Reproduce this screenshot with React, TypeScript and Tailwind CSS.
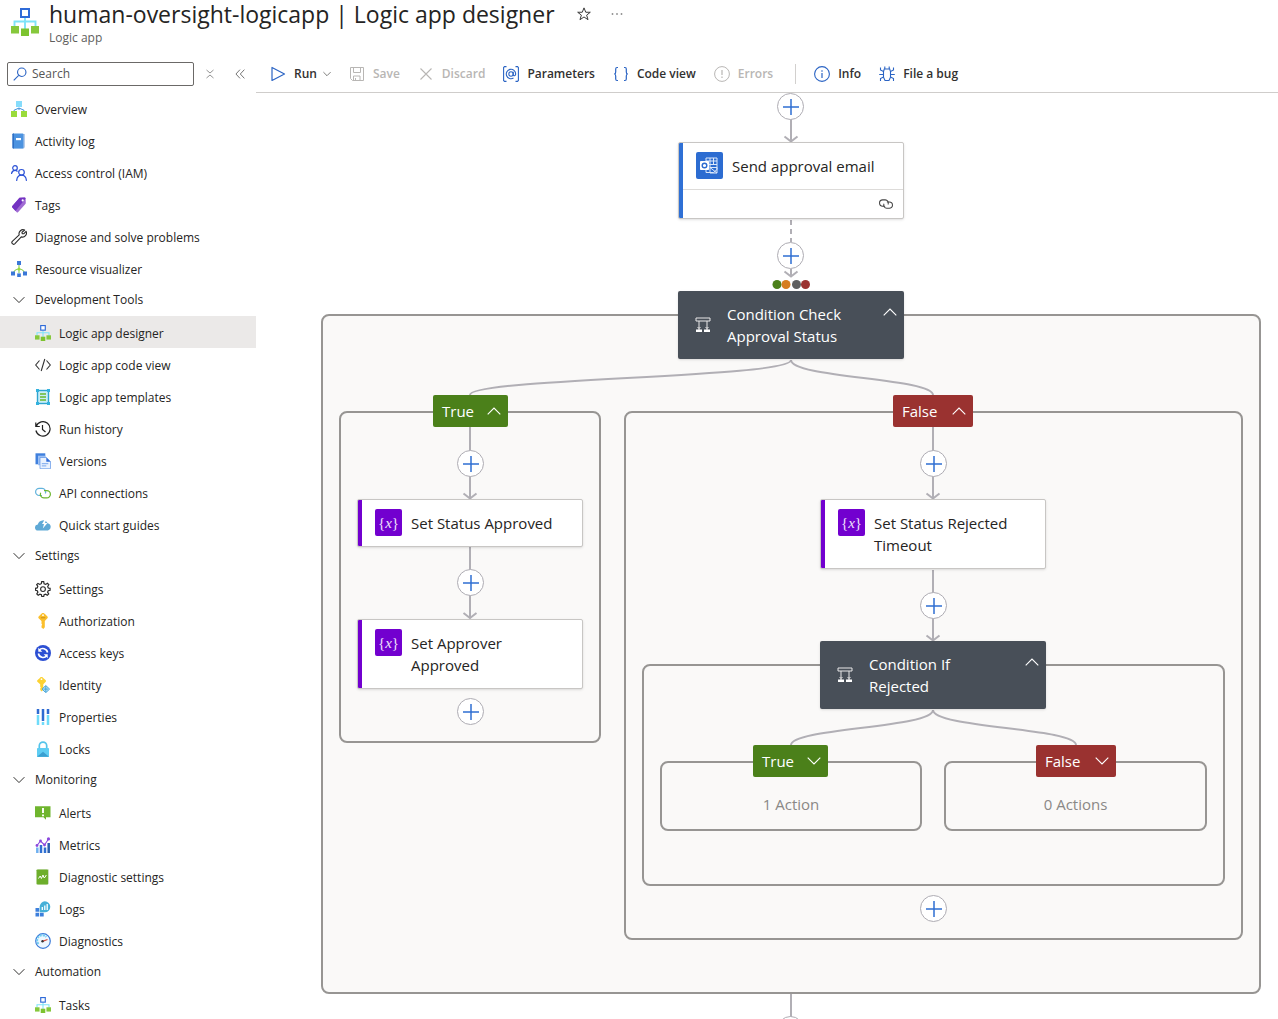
import type { ReactNode } from "react";

/* ---------- shared drawing helpers ---------- */

function Svg({ children, size = "h-4 w-4", box = "0 0 16 16" }: { children: ReactNode; size?: string; box?: string }) {
  return (
    <svg className={`${size} shrink-0`} viewBox={box} fill="none" aria-hidden="true">
      {children}
    </svg>
  );
}

function Chevron({ up = false, size = "h-2 w-3.5" }: { up?: boolean; size?: string }) {
  return (
    <Svg size={size} box="0 0 14 8">
      <path d={up ? "M.7 7.3 7 1l6.3 6.3" : "M.7.7 7 7 13.3.7"} stroke="currentColor" strokeWidth="1.1" />
    </Svg>
  );
}

function LogicAppMark({ size }: { size?: string }) {
  return (
    <Svg size={size} box="0 0 28 28">
      <path d="M14 9v12M3.500 19v-5.500h21V19" stroke="#7fe3f8" strokeWidth="1.900" />
      <rect x="10" y="1" width="8" height="8" fill="#fff" stroke="#2f6bd8" strokeWidth="2" />
      <rect x="0" y="18" width="8" height="7.500" fill="#86c83c" />
      <rect x="10" y="20.500" width="8" height="7.500" fill="#7dc32f" />
      <rect x="20" y="18" width="8" height="7.500" fill="#86c83c" />
    </Svg>
  );
}

const icons: Record<string, ReactNode> = {
  overview: (
    <Svg>
      <path d="M8 7v2M3 10.500V9.300L8 7l5 2.300v1.200" stroke="#3f8fd8" strokeWidth="1" />
      <rect x="5" y="0" width="6" height="6" fill="#86dcfb" />
      <rect x="0" y="10" width="6" height="6" fill="#9adb3b" />
      <rect x="10" y="10" width="6" height="6" fill="#9adb3b" />
    </Svg>
  ),
  activity: (
    <Svg>
      <path d="M3 1h11v13l-1 1.500H3z" fill="#b8cdea" />
      <rect x="1.500" y=".5" width="11" height="15" rx=".8" fill="#4c93e0" />
      <path d="M1.500 1.300c0-.5.3-.8.8-.8H3v15h-.7c-.5 0-.8-.3-.8-.8z" fill="#2f6fc4" />
      <rect x="5" y="5" width="5" height="2.200" fill="#fff" />
    </Svg>
  ),
  access: (
    <Svg>
      <g stroke="#2c52d6" strokeWidth="1.200" strokeLinecap="round">
        <circle cx="4" cy="3" r="2.300" />
        <circle cx="10.500" cy="7.300" r="2.800" />
        <path d="M.5 8.500C1 6.500 2.300 5.400 4 5.400c.9 0 1.600.3 2.200.8M5.700 15.400c.3-3 2.200-5.200 4.800-5.200s4.600 2.200 4.900 5.200" />
      </g>
    </Svg>
  ),
  tags: (
    <Svg>
      <path d="M8.500.8 13.600.5c.5 0 .9.400 1 .9l.2 4.600c0 .4-.1.700-.4 1L7 15.200c-.4.400-.9.400-1.300 0L1.300 10.500c-.4-.4-.4-1 0-1.400z" fill="#a06bd3" />
      <path d="M8.500.8 13.600.5c.5 0 .9.400 1 .9L4.500 13.900 1.300 10.500c-.4-.4-.4-1 0-1.400z" fill="#7433c2" />
      <circle cx="11.700" cy="3.400" r="1.100" fill="#fff" />
    </Svg>
  ),
  wrench: (
    <Svg>
      <path
        d="M13.700 1.100a4 4 0 0 0-5.500 4.800L1.300 12.400a1.700 1.700 0 0 0 2.400 2.400l6.600-6.900a4 4 0 0 0 4.800-5.500L12.700 4.800l-1.500-.2-.2-1.300z"
        stroke="#2b2b2b"
        strokeWidth="1.100"
        strokeLinejoin="round"
      />
    </Svg>
  ),
  visualizer: (
    <Svg>
      <path d="M8 4v8M2.500 11.500C4 8.500 6 8 8 8s4 .5 5.500 3.500" stroke="#8fd05a" strokeWidth="1.200" />
      <circle cx="8" cy="8" r="1.500" fill="#9adb3b" />
      <rect x="6" y="0" width="4" height="4" fill="#3b78d8" />
      <rect x="0" y="10.500" width="4" height="4" fill="#3b78d8" />
      <rect x="6.200" y="12.400" width="3.600" height="3.600" fill="#3b78d8" />
      <rect x="12" y="10.500" width="4" height="4" fill="#3b78d8" />
    </Svg>
  ),
  designer: <LogicAppMark size="h-4 w-4" />,
  code: (
    <Svg>
      <path d="M4.500 3.500.7 8l3.800 4.500M11.500 3.500 15.300 8l-3.800 4.500M9.800 2 6.200 14" stroke="#333" strokeWidth="1.100" />
    </Svg>
  ),
  templates: (
    <Svg>
      <rect x="2.500" y="1.500" width="11" height="13" fill="#c8eef8" stroke="#2fa4cf" strokeWidth="1.400" />
      <path d="M1 0h3v3H1zM12 0h3v3h-3zM1 13h3v3H1zM12 13h3v3h-3z" fill="#32b2de" />
      <path d="M5 5h6M5 8h6M5 11h6" stroke="#69b82d" strokeWidth="1.600" />
    </Svg>
  ),
  history: (
    <Svg>
      <path d="M1.200 5.200A7.200 7.200 0 1 1 .9 9.500M.8 1.500v4h4M7.500 4v4.500l3 2.500" stroke="#222" strokeWidth="1.200" />
    </Svg>
  ),
  versions: (
    <Svg>
      <path d="M.5.3h9.800v11H.5z" fill="#4080dd" />
      <path d="M3 2.700h7.500v9.500H3z" fill="#9cc0f4" />
      <path d="M5 4.500h6.500l4 4v7.200H5z" fill="#eaf2fe" stroke="#5d93e6" strokeWidth=".7" />
      <path d="m11.300 4.500 4.200 4.200h-4.200z" fill="#2f6bd8" />
      <path d="M6.800 10.700h6.500M6.800 12.900h4.500" stroke="#79a7ec" />
    </Svg>
  ),
  api: (
    <Svg>
      <path d="M7 10.500H4.200A3.600 3.600 0 0 1 4.200 3.300H7a3.600 3.600 0 0 1 3.300 5.200" stroke="#62b3dc" strokeWidth="1.200" />
      <path d="M9 5.700h2.800a3.600 3.600 0 0 1 0 7.200H9A3.600 3.600 0 0 1 5.700 7.700" stroke="#6cb52e" strokeWidth="1.200" />
    </Svg>
  ),
  quick: (
    <Svg>
      <path d="M3.200 13.500a3 3 0 0 1-.4-6 5.300 5.300 0 0 1 9.900-1.200 3.700 3.700 0 0 1 .3 7.200z" fill="#5fa9d6" />
      <path d="m10 2-3 5h2l-1.200 4.500L12.500 6H10l1.500-4z" fill="#fff" />
    </Svg>
  ),
  gear: (
    <Svg>
      <path
        d="m6.700.7-.4 2-1.500.7-1.800-1L1.700 3.700l1.100 1.700-.6 1.500-1.700.4v2l1.800.4.6 1.500-1.100 1.700L3.200 14.300l1.700-1.100 1.500.6.400 1.700h1.900l.4-1.700 1.500-.6 1.700 1.100 1.400-1.400-1.100-1.700.6-1.500 1.900-.4v-2L13.300 7l-.6-1.500 1.100-1.800-1.400-1.400-1.700 1.100-1.600-.6-.4-2.100z"
        stroke="#2b2b2b"
        strokeWidth="1.200"
      />
      <circle cx="8" cy="8.100" r="2.400" stroke="#2b2b2b" strokeWidth="1.100" />
    </Svg>
  ),
  key: (
    <Svg>
      <path d="M8 0c1 0 1.500.6 2.200 1.300l2 2c.8.700.8 1.500 0 2.200L9.800 8v6.300L8.300 16 6.500 14.500v-1.800l.7-.9-.7-1V8L3.900 5.500c-.8-.7-.8-1.500 0-2.200l2-2C6.500.6 7 0 8 0z" fill="#fbbf2c" />
      <path d="M5.800 4.800h4.500" stroke="#c98d15" />
      <circle cx="8" cy="2.200" r=".9" fill="#fff" />
    </Svg>
  ),
  refresh: (
    <Svg>
      <circle cx="8" cy="8" r="8" fill="#2c4fd3" />
      <path d="M12.600 7.500A4.800 4.800 0 0 0 4.200 5.200M3.400 8.500a4.800 4.800 0 0 0 8.400 2.300" stroke="#fff" strokeWidth="1.600" />
      <path d="M3.300 2.800v4h4zM12.700 13.200v-4h-4z" fill="#fff" />
    </Svg>
  ),
  identity: (
    <Svg>
      <path d="M6.500 0c.9 0 1.300.5 2 1.200l2 1.900c.7.600.7 1.300 0 1.900L8.300 7.300v5.400L6.600 14.400 5.200 13v-1.600l.6-.8-.6-.9V7.300L2.600 5c-.7-.6-.7-1.300 0-1.900l2-1.900C5.200.5 5.600 0 6.500 0z" fill="#fcd232" />
      <circle cx="6.500" cy="2.200" r=".9" fill="#fff" />
      <path d="m10.800 8.500 3.800 3.600-3.800 3.600L7 12.100z" fill="#b5e1f8" stroke="#3e9fd2" strokeWidth=".9" />
      <path d="M10.800 9v6M8.500 12.100h4.600" stroke="#3e9fd2" strokeWidth=".9" />
    </Svg>
  ),
  properties: (
    <Svg>
      <path d="M3 0v5M8 0v12M13 0v5" stroke="#2f6bd2" strokeWidth="2.500" />
      <path d="M3 6v10M8 13v3M13 6v10" stroke="#6fdcfa" strokeWidth="2.500" />
    </Svg>
  ),
  lock: (
    <Svg>
      <path d="M4.300 8V4.800a3.700 3.700 0 0 1 7.400 0V8" stroke="#55c4ea" strokeWidth="1.700" />
      <rect x="2" y="7" width="12" height="9" rx=".7" fill="#5ecdf3" />
      <path d="m2 15.700 6-5 6 5z" fill="#3a9fd0" />
    </Svg>
  ),
  alerts: (
    <Svg>
      <path d="M0 1.200h15.500v11H11v2.500l-2.500-2.500H0z" fill="#6fb52e" />
      <path d="M8 3v5M8 9.500v1.800" stroke="#fff" strokeWidth="1.900" />
    </Svg>
  ),
  metrics: (
    <Svg>
      <path d="M2.300 10.500V16" stroke="#6fb0f0" strokeWidth="2.500" />
      <path d="M13.700 6v10" stroke="#2a5fae" strokeWidth="2.500" />
      <path d="M6 8V16M10 10.500V16" stroke="#2f6fd2" strokeWidth="2.500" />
      <path d="M2 8.500 5.500 4l4 4 4-6" stroke="#8b48dd" strokeWidth="1.100" />
      <g fill="#8b48dd">
        <circle cx="2" cy="8.500" r="1.400" />
        <circle cx="5.500" cy="4" r="1.400" />
        <circle cx="9.500" cy="8" r="1.400" />
        <circle cx="13.500" cy="1.900" r="1.600" />
      </g>
    </Svg>
  ),
  diagsettings: (
    <Svg>
      <path d="M3 .5h11v14l-1 1H3z" fill="#cfdcc2" />
      <rect x="1.500" y=".5" width="11.500" height="15" rx=".7" fill="#6dae2b" />
      <path d="m3.500 9.500 1.700-2.500 1.200 2.500 1.600-3.500.8 2.500h1l1.500-2.500" stroke="#fff" strokeWidth="1" />
    </Svg>
  ),
  logs: (
    <Svg>
      <path d="M.5 7h3.700v3.700H.5zM.5 11.700h3.700v3.800H.5zM5 11.700h3.700v3.800H5z" fill="#3d7fdc" />
      <path d="M9.800.3a5.500 5.500 0 1 1 0 11H4.700V5.500A5.400 5.400 0 0 1 9.800.3z" fill="#45b0d8" />
      <path d="M7.300 6v3M9.800 4.500V9M12.200 3v6" stroke="#fff" strokeWidth="1.300" />
    </Svg>
  ),
  diagnostics: (
    <Svg>
      <circle cx="8" cy="8" r="7.300" fill="#eef8ff" stroke="#3c7bd9" strokeWidth="1.200" />
      <path d="M3.500 11a5.200 5.200 0 0 1 7.800-7" stroke="#73cdf2" strokeWidth="1.900" strokeDasharray="2.200 .8" />
      <path d="m7.500 8.400 5-1.900" stroke="#d84b3c" strokeWidth="1.200" />
      <circle cx="7.500" cy="8.300" r="1.200" fill="#333" />
    </Svg>
  ),
};

/* ---------- sidebar ---------- */

type Item = { icon: string; label: string; active?: boolean };

const topItems: Item[] = [
  { icon: "overview", label: "Overview" },
  { icon: "activity", label: "Activity log" },
  { icon: "access", label: "Access control (IAM)" },
  { icon: "tags", label: "Tags" },
  { icon: "wrench", label: "Diagnose and solve problems" },
  { icon: "visualizer", label: "Resource visualizer" },
];

const groups: { title: string; items: Item[] }[] = [
  {
    title: "Development Tools",
    items: [
      { icon: "designer", label: "Logic app designer", active: true },
      { icon: "code", label: "Logic app code view" },
      { icon: "templates", label: "Logic app templates" },
      { icon: "history", label: "Run history" },
      { icon: "versions", label: "Versions" },
      { icon: "api", label: "API connections" },
      { icon: "quick", label: "Quick start guides" },
    ],
  },
  {
    title: "Settings",
    items: [
      { icon: "gear", label: "Settings" },
      { icon: "key", label: "Authorization" },
      { icon: "refresh", label: "Access keys" },
      { icon: "identity", label: "Identity" },
      { icon: "properties", label: "Properties" },
      { icon: "lock", label: "Locks" },
    ],
  },
  {
    title: "Monitoring",
    items: [
      { icon: "alerts", label: "Alerts" },
      { icon: "metrics", label: "Metrics" },
      { icon: "diagsettings", label: "Diagnostic settings" },
      { icon: "logs", label: "Logs" },
      { icon: "diagnostics", label: "Diagnostics" },
    ],
  },
  { title: "Automation", items: [{ icon: "designer", label: "Tasks" }] },
];

function NavLink({ item, nested = false }: { item: Item; nested?: boolean }) {
  return (
    <li>
      <a
        href="#"
        aria-current={item.active ? "page" : undefined}
        className={`flex h-8 items-center gap-2 pt-0.5 ${nested ? "pl-[35px]" : "pl-[11px]"} ${item.active ? "bg-[#ebe9e8]" : ""}`}
      >
        {icons[item.icon]}
        <span className="pt-0.5">{item.label}</span>
      </a>
    </li>
  );
}

function Sidebar() {
  return (
    <aside className="flex w-64 shrink-0 flex-col overflow-hidden">
      <div className="flex h-[37px] shrink-0 items-center pl-[7px]">
        <label className="flex h-6 w-[187px] items-center gap-[5px] rounded-xs border border-[#6b6967] pl-[5px]">
          <Svg size="h-3.5 w-3.5">
            <circle cx="10" cy="6" r="4.800" stroke="#2b64c4" strokeWidth="1.300" />
            <path d="M6.500 9.500.8 15.200" stroke="#2b64c4" strokeWidth="1.300" />
          </Svg>
          <input type="search" aria-label="Search" placeholder="Search" className="w-full min-w-0 bg-transparent outline-none placeholder:text-[#555]" />
        </label>
        <button aria-label="Expand all" className="ml-3 text-[#777]">
          <Svg size="h-2.5 w-2">
            <path d="m1 0 7 6 7-6M1 16l7-6 7 6" stroke="currentColor" strokeWidth="1.600" />
          </Svg>
        </button>
        <button aria-label="Collapse menu" className="ml-[21px] text-[#555]">
          <Svg size="h-2.5 w-2.5">
            <path d="M8 1 1.500 8 8 15M15 1 8.500 8l6.500 7" stroke="currentColor" strokeWidth="1.300" />
          </Svg>
        </button>
      </div>
      <nav>
        <ul>
          {topItems.map((item) => (
            <NavLink key={item.label} item={item} />
          ))}
        </ul>
        {groups.map((group) => (
          <section key={group.title}>
            <button className="flex h-8 w-full items-center gap-2.5 pl-[13px]">
              <Chevron size="h-2 w-3" />
              <span>{group.title}</span>
            </button>
            <ul>
              {group.items.map((item) => (
                <NavLink key={item.label} item={item} nested />
              ))}
            </ul>
          </section>
        ))}
      </nav>
    </aside>
  );
}

/* ---------- toolbar ---------- */

function Tool({ label, icon, disabled = false, menu = false }: { label: string; icon: ReactNode; disabled?: boolean; menu?: boolean }) {
  return (
    <button disabled={disabled} className={`flex items-center gap-2 ${disabled ? "text-[#b8b6b4]" : "text-[#323130]"}`}>
      {icon}
      <span className="font-semibold">{label}</span>
      {menu && <Chevron size="-ml-0.5 h-2 w-2" />}
    </button>
  );
}

function Toolbar() {
  return (
    <div className="flex h-[38px] shrink-0 items-center gap-[18px] overflow-hidden border-b border-[#cfcdcb] pl-[14px] whitespace-nowrap" role="toolbar">
      <Tool label="Run" menu icon={<Svg><path d="M2 1.500v13L14.500 8z" stroke="#2b64c4" strokeWidth="1.200" strokeLinejoin="round" /></Svg>} />
      <Tool
        label="Save"
        disabled
        icon={
          <Svg>
            <path d="M1.500 1.500h13v13h-11l-2-2zM4.500 1.500v5h7v-5M4.500 14.500v-4.500h6.500v4.500M6.500 12v2.500" stroke="currentColor" />
          </Svg>
        }
      />
      <Tool label="Discard" disabled icon={<Svg><path d="m2.500 2.500 11 11M13.500 2.500l-11 11" stroke="currentColor" strokeWidth="1.100" /></Svg>} />
      <Tool
        label="Parameters"
        icon={
          <Svg>
            <g stroke="#2b64c4" strokeWidth="1.100">
              <path d="M3.500.6h-2l-.9.900v13l.9.900h2M12.500.6h2l.9.900v13l-.9.900h-2" />
              <circle cx="8" cy="8" r="2.200" />
              <path d="M10.200 5.800v3c0 1.600 2.500 1.300 2.500-.8A4.700 4.700 0 1 0 10.500 12" />
            </g>
          </Svg>
        }
      />
      <Tool
        label="Code view"
        icon={
          <Svg>
            <path d="M5 1.500H4c-1 0-1.300.6-1.300 1.500v3c0 1.200-.5 2-1.500 2 1 0 1.500.8 1.500 2v3c0 .9.300 1.500 1.300 1.500h1M11 1.500h1c1 0 1.300.6 1.300 1.500v3c0 1.200.5 2 1.500 2-1 0-1.500.8-1.500 2v3c0 .9-.3 1.500-1.300 1.500h-1" stroke="#2b64c4" strokeWidth="1.200" />
          </Svg>
        }
      />
      <Tool
        label="Errors"
        disabled
        icon={
          <Svg>
            <circle cx="8" cy="8" r="7.400" stroke="currentColor" />
            <path d="M8 4v5M8 10.500v1.500" stroke="currentColor" strokeWidth="1.200" />
          </Svg>
        }
      />
      <span className="ml-1 h-5 w-px bg-[#d2d0ce]" />
      <Tool
        label="Info"
        icon={
          <Svg>
            <circle cx="8" cy="8" r="7.400" stroke="#2b64c4" strokeWidth="1.100" />
            <path d="M8 7v5M8 4.300v1.400" stroke="#2b64c4" strokeWidth="1.200" />
          </Svg>
        }
      />
      <Tool
        label="File a bug"
        icon={
          <Svg>
            <g stroke="#2b64c4" strokeWidth="1.100">
              <path d="M4.500 5.500 5.300 3h5.400l.8 2.500v5.700L10 14.500H6l-1.500-3.300zM5.800 3V.5M10.200 3V.5" />
              <path d="M4.500 5.500 1.500 4V1.500M4.500 8.500H.2M4.500 11 1.500 12.500V15M11.500 5.500l3-1.500V1.500M11.500 8.500h4.300M11.500 11l3 1.500V15" />
            </g>
          </Svg>
        }
      />
    </div>
  );
}

/* ---------- designer canvas ---------- */

function Frame({ at, children }: { at: string; children?: ReactNode }) {
  return <div className={`absolute rounded-lg border-2 border-[#979593] ${at}`}>{children}</div>;
}

function AddStep({ at }: { at: string }) {
  return (
    <button aria-label="Add a step" className={`absolute flex h-[27px] w-[27px] items-center justify-center rounded-full border border-[#aeacb3] bg-white ${at}`}>
      <Svg>
        <path d="M8 0v16M0 8h16" stroke="#2f6fd2" strokeWidth="1.500" />
      </Svg>
    </button>
  );
}

function VariableIcon() {
  return (
    <span className="flex h-[27px] w-[27px] shrink-0 items-center justify-center rounded-xs bg-[#7200cf] font-['Liberation_Serif',serif] text-[15px] leading-5 text-[#f0e2fb]">
      {"{"}
      <i>x</i>
      {"}"}
    </span>
  );
}

function OutlookIcon() {
  return (
    <span className="flex h-[27px] w-[27px] shrink-0 items-center justify-center rounded-xs bg-[#2c6cd1]">
      <Svg size="h-[17px] w-[19px]" box="0 0 19 17">
        <path d="M6 1h11v11.500l-3.500 3H6zM6 4h11M6 7.500h11M10 1v10M13.500 1v7" stroke="#dce8fa" />
        <path d="M10 10.500h7v5.500h-7zM10 10.500l7 5.500" stroke="#dce8fa" />
        <rect x="0" y="4" width="9" height="9" rx=".8" fill="#fff" />
        <circle cx="4.500" cy="8.500" r="2.300" stroke="#2c6cd1" strokeWidth="1.400" />
      </Svg>
    </span>
  );
}

function ActionCard({ at, accent, icon, label, footer }: { at: string; accent: string; icon: ReactNode; label: string; footer?: ReactNode }) {
  return (
    <div className={`absolute flex w-[226px] overflow-hidden rounded-xs border border-[#c8c6c4] bg-white shadow ${at}`}>
      <span className={`-my-px -ml-px w-[5px] shrink-0 ${accent}`} />
      <div className="flex-1">
        <div className="flex gap-[9px] pt-[9px] pr-4 pb-2.5 pl-[13px]">
          {icon}
          <span className="pt-[3px] pb-0.5 leading-[22px]">{label}</span>
        </div>
        {footer}
      </div>
    </div>
  );
}

function ConditionCard({ at, label }: { at: string; label: string }) {
  return (
    <div className={`absolute flex h-[68px] w-[226px] items-center rounded-xs bg-[#484f58] pl-[17px] text-white shadow ${at}`}>
      <Svg>
        <path d="M1 1h14v3H1zM4 4v9M12 4v9M2.500 10 4 11.500 5.500 10M10.500 10l1.500 1.500 1.500-1.500" stroke="#e8e8e8" />
        <path d="M1 12.500h6V15H1zM9 12.500h6V15H9z" fill="#fff" />
      </Svg>
      <span className="ml-4 w-[140px] leading-[22px]">{label}</span>
      <button aria-label={`Collapse ${label}`} className="-mt-[26px] mr-[7px] ml-auto">
        <Chevron up />
      </button>
    </div>
  );
}

function Branch({ at, kind, open = false }: { at: string; kind: "True" | "False"; open?: boolean }) {
  return (
    <button
      aria-expanded={open}
      className={`absolute flex h-8 items-center justify-between rounded-xs pr-[7px] pl-[9px] text-white ${kind === "True" ? "w-[75px] bg-[#4b801a]" : "w-20 bg-[#9a3230]"} ${at}`}
    >
      <span>{kind}</span>
      <Chevron up={open} />
    </button>
  );
}

function Edges() {
  return (
    <svg className="absolute top-0 left-0 h-[927px] w-[1022px]" viewBox="0 0 1022 927" fill="none" stroke="#b1afb5" strokeWidth="2" aria-hidden="true">
      <path d="M535 26v21M528.500 43.500 535 48.500 541.500 43.500" />
      <path d="M535 127v22" strokeDasharray="5 4" />
      <path d="M535 176v6M528.500 178.500 535 183.500 541.500 178.500" />
      <path d="M535 267C535 285 214 285 214 302M535 267C535 285 677 285 677 302" />
      <path d="M214 334v70M207.500 400.500 214 405.500 220.500 400.500" />
      <path d="M214 454v70M207.500 520 214 525 220.500 520" />
      <path d="M677 334v70M670.500 400.500 677 405.500 683.500 400.500" />
      <path d="M677 477v70M670.500 542.500 677 547.500 683.500 542.500" />
      <path d="M677 617C677 635 535 635 535 652M677 617C677 635 820 635 820 652" />
      <path d="M535 901v26" />
      <g stroke="none">
        <circle cx="521" cy="191.500" r="4.500" fill="#4b801a" />
        <circle cx="530" cy="191.500" r="4.500" fill="#d67d1f" />
        <circle cx="540.500" cy="191.500" r="4.500" fill="#5f5f5f" />
        <circle cx="549.500" cy="191.500" r="4.500" fill="#9a3230" />
      </g>
    </svg>
  );
}

function Canvas() {
  const variable = { accent: "bg-[#7200cf]", icon: <VariableIcon /> };
  return (
    <div className="relative flex-1 overflow-hidden text-[15px]">
      <Frame at="top-[221px] left-[65px] h-[680px] w-[940px] bg-[#faf9f8]" />
      <Frame at="top-[318px] left-[83px] h-[332px] w-[262px]" />
      <Frame at="top-[318px] left-[368px] h-[529px] w-[619px]" />
      <Frame at="top-[571px] left-[386px] h-[222px] w-[583px]" />
      <Frame at="top-[668px] left-[404px] h-[70px] w-[262px]">
        <p className="pt-[31px] text-center leading-5 text-[#8a8886]">1 Action</p>
      </Frame>
      <Frame at="top-[668px] left-[688px] h-[70px] w-[263px]">
        <p className="pt-[31px] text-center leading-5 text-[#8a8886]">0 Actions</p>
      </Frame>
      <Edges />

      <AddStep at="top-0 left-[521px]" />
      <ActionCard
        at="top-[49px] left-[422px]"
        accent="bg-[#2f70d5]"
        icon={<OutlookIcon />}
        label="Send approval email"
        footer={
          <div className="flex h-[29px] items-center justify-end border-t border-[#dddbd9] pr-2.5">
            <Svg size="h-3.5 w-3.5">
              <path d="M7 10.500H4.200A3.600 3.600 0 0 1 4.200 3.300H7a3.600 3.600 0 0 1 3.300 5.200" stroke="#444" strokeWidth="1.200" />
              <path d="M9 5.700h2.800a3.600 3.600 0 0 1 0 7.200H9A3.600 3.600 0 0 1 5.700 7.700" stroke="#444" strokeWidth="1.200" />
            </Svg>
          </div>
        }
      />
      <AddStep at="top-[149px] left-[521px]" />
      <ConditionCard at="top-[198px] left-[422px]" label="Condition Check Approval Status" />

      <Branch at="top-[302px] left-[177px]" kind="True" open />
      <AddStep at="top-[357px] left-[201px]" />
      <ActionCard at="top-[406px] left-[101px]" label="Set Status Approved" {...variable} />
      <AddStep at="top-[476px] left-[201px]" />
      <ActionCard at="top-[526px] left-[101px]" label="Set Approver Approved" {...variable} />
      <AddStep at="top-[605px] left-[201px]" />

      <Branch at="top-[302px] left-[637px]" kind="False" open />
      <AddStep at="top-[357px] left-[664px]" />
      <ActionCard at="top-[406px] left-[564px]" label="Set Status Rejected Timeout" {...variable} />
      <AddStep at="top-[499px] left-[664px]" />
      <ConditionCard at="top-[548px] left-[564px]" label="Condition If Rejected" />
      <Branch at="top-[652px] left-[497px]" kind="True" />
      <Branch at="top-[652px] left-[780px]" kind="False" />
      <AddStep at="top-[802px] left-[664px]" />
      <AddStep at="top-[923px] left-[521px]" />
    </div>
  );
}

/* ---------- page ---------- */

export default function App() {
  return (
    <div className="flex h-screen flex-col overflow-hidden bg-white font-['Open_Sans','Noto_Sans',sans-serif] text-xs text-[#252423]">
      <header className="flex h-[55px] shrink-0 gap-2.5 pl-[11px]">
        <div className="pt-2">
          <LogicAppMark size="h-7 w-7" />
        </div>
        <div>
          <div className="flex h-7 items-center">
            <h1 className="text-[23px] leading-7">human-oversight-logicapp | Logic app designer</h1>
            <button aria-label="Add to favorites" className="ml-[22px]">
              <Svg size="h-3.5 w-3.5">
                <path d="m8 1 2 5h5.200l-4.200 3.300 1.600 5.200L8 11.400l-4.600 3.100L5 9.300.8 6H6z" stroke="#333" strokeWidth="1.100" />
              </Svg>
            </button>
            <button aria-label="More options" className="ml-5">
              <Svg size="h-3 w-3">
                <path d="M1 7h2v2H1zM7 7h2v2H7zM13 7h2v2h-2z" fill="#777" />
              </Svg>
            </button>
          </div>
          <p className="leading-5 text-[#605e5c]">Logic app</p>
        </div>
      </header>
      <div className="flex min-h-0 flex-1">
        <Sidebar />
        <main className="flex min-w-0 flex-1 flex-col">
          <Toolbar />
          <Canvas />
        </main>
      </div>
    </div>
  );
}
